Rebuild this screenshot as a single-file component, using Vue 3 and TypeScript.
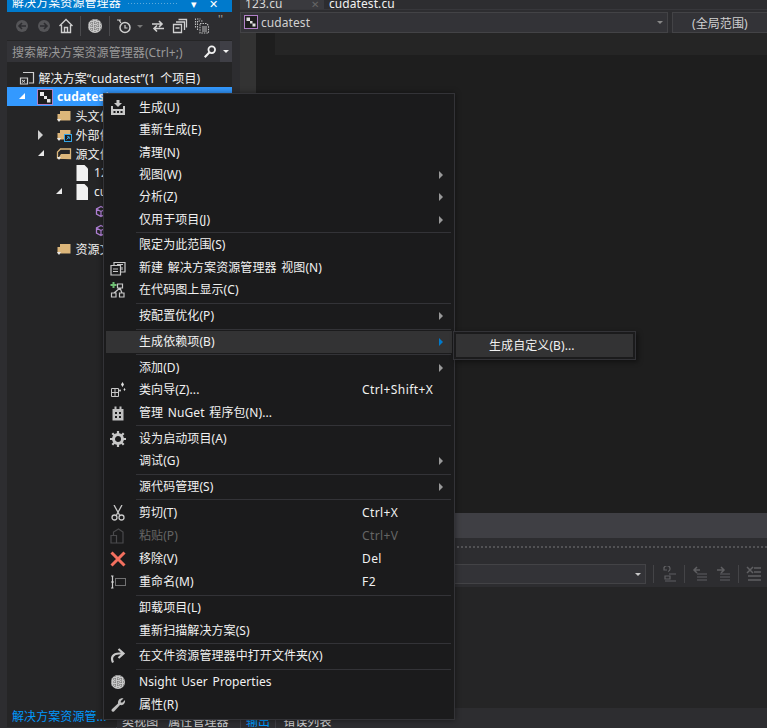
<template>
  <div class="ide">
    <div class="left-col">
      <div class="panel">
        <div class="title-bar">
          <span class="title-text">解决方案资源管理器</span>
          <span class="grip"></span>
          <span class="title-btn">▾</span>
          <span class="title-btn">✕</span>
        </div>
        <div class="toolbar">
          <svg class="tb-icon" viewBox="0 0 16 16"><circle cx="8" cy="8" r="6" fill="#555558" /><path d="M12 8H5M8 5 5 8l3 3" fill="none" stroke="#2d2d30" stroke-width="1.6" /></svg>
          <svg class="tb-icon" viewBox="0 0 16 16"><circle cx="8" cy="8" r="6" fill="#555558" /><path d="M4 8h7M8 5l3 3-3 3" fill="none" stroke="#2d2d30" stroke-width="1.6" /></svg>
          <svg class="tb-icon" viewBox="0 0 16 16"><path d="M1.500 8 8 1.500 14.500 8M3.500 7v7.500h9V7M6.500 14.500v-5h3v5" fill="none" stroke="#d0d0d0" stroke-width="1.400" /></svg>
          <span class="tb-sep"></span>
          <svg class="tb-icon" viewBox="0 0 16 16"><circle cx="8" cy="8" r="7" fill="#c8c8c8" /><path d="M5 2v12M8 1v14M11 2v12M1 5h14M1 8h14M1 11h14" stroke="#6a6a6a" stroke-width="1" stroke-dasharray="1 1" /></svg>
          <span class="tb-sep"></span>
          <svg class="tb-icon" viewBox="0 0 16 16"><circle cx="9" cy="9.500" r="5" fill="none" stroke="#d0d0d0" stroke-width="1.500" /><path d="M9 7v3h2.500M1 2h4M3 2l2 3" fill="none" stroke="#d0d0d0" stroke-width="1.200" /></svg>
          <span class="tb-caret"></span>
          <svg class="tb-icon" viewBox="0 0 16 16"><path d="M2 6h10M9 3l3 3-3 3M14 10.500H4M7 7.500l-3 3 3 3" fill="none" stroke="#d0d0d0" stroke-width="1.600" /></svg>
          <svg class="tb-icon" viewBox="0 0 16 16"><path d="M1.500 6.500h8v8h-8zM4 4h8.500v8M6.500 1.500h8v8" fill="none" stroke="#d0d0d0" stroke-width="1.300" /><path d="M3.500 10h4" stroke="#d0d0d0" stroke-width="1.500" /></svg>
          <svg class="tb-icon" viewBox="0 0 16 16"><path d="M6 5.500h6.500l2 2v7.500H6zM3.500 12V3h6M1.500 9.500V1h5" fill="none" stroke="#c0c0c0" stroke-width="1.100" stroke-dasharray="1.500 1" /><path d="M8 9h5M8 11h5M8 13h5" stroke="#c0c0c0" /></svg>
          <span class="tb-more">''</span>
        </div>
        <div class="search">
          <span class="search-hint">搜索解决方案资源管理器(Ctrl+;)</span>
          <svg class="search-icon" viewBox="0 0 16 16"><circle cx="10" cy="5.500" r="3.800" fill="none" stroke="#f1f1f1" stroke-width="2" /><path d="M7.200 8.500 2 14" stroke="#f1f1f1" stroke-width="2.400" /></svg>
          <span class="search-drop"><i class="caret-white"></i></span>
        </div>
        <div class="tree">
          <div
            v-for="row in treeRows"
            :key="row.id"
            :class="['tree-row', { selected: row.selected }]"
            :style="{ paddingLeft: 30 + 18.5 * row.depth + 'px' }"
          >
            <span v-if="row.arrow" :class="['tree-arrow', row.arrow]"></span>
            <svg class="tree-icon" viewBox="0 0 16 16">
              <template v-if="row.icon === 'solution'">
                <path d="M4 2.500h10.500v10.500H10M1.500 8h7v6h-7z" fill="none" stroke="#d0d0d0" stroke-width="1.200" />
                <path d="M3 10l3 2.500M6 10l-3 2.500" stroke="#d0d0d0" />
              </template>
              <template v-else-if="row.icon === 'project'">
                <rect x="0.500" y="0.500" width="15" height="15" fill="#1e1e1e" stroke="#b180c8" />
                <path d="M3 3h4v4H3zM7 7h3v3H7zM10 10h3.500v3.500H10z" fill="#e8e8e8" />
              </template>
              <template v-else-if="row.icon === 'folder' || row.icon === 'folderLink'">
                <path d="M4 3h10.500v9.500H1.500V6H4z" fill="#dcb67a" />
                <path d="M1 11h4l-2 3z" fill="#e8e8e8" />
                <template v-if="row.icon === 'folderLink'">
                  <rect x="8.500" y="7.500" width="7" height="7" fill="#1e1e1e" stroke="#35a7e8" />
                  <path d="M10.500 12.500 13 10M11 9.800h2.200V12" fill="none" stroke="#35a7e8" />
                </template>
              </template>
              <template v-else-if="row.icon === 'folderOpen'">
                <path d="M1.500 12V6l3-3h10v9.500z" fill="none" stroke="#dcb67a" stroke-width="1.300" />
                <path d="M2 12.500 5 8h9.500v4.500z" fill="#dcb67a" />
                <path d="M1 11h4l-2 3z" fill="#e8e8e8" />
              </template>
              <path v-else-if="row.icon === 'file'" d="M2.500 0h8l3.500 3.500V16H2.500z" fill="#f1f1f1" />
              <template v-else-if="row.icon === 'cube'">
                <path d="M8 3.500 12.500 6v5L8 13.500 3.500 11V6zM3.500 6 8 8.500 12.500 6M8 8.500v5" fill="none" stroke="#b180d7" stroke-width="1.300" />
              </template>
            </svg>
            <span class="tree-label">{{ row.label }}</span>
          </div>
        </div>
      </div>
      <div class="panel-tabs">
        <span class="panel-tab active">解决方案资源管...</span>
        <span class="panel-tab first">类视图</span>
        <span class="panel-tab">属性管理器</span>
      </div>
    </div>

    <div class="right-col">
      <div class="doc-tabs">
        <span class="doc-tab">123.cu <i class="pin"></i><i class="tab-x">✕</i></span>
        <span class="doc-tab current">cudatest.cu</span>
      </div>
      <div class="nav-bar">
        <div class="combo main-combo">
          <svg class="tree-icon" viewBox="0 0 16 16">
            <rect x="0.500" y="0.500" width="13" height="13" fill="#1e1e1e" stroke="#b180c8" />
            <path d="M2.500 2.500h3.500v3.500h-3.500zM6 6h2.500v2.500H6zM8.500 8.500h3v3h-3z" fill="#e0e0e0" />
          </svg>
          <span class="combo-text">cudatest</span>
          <i class="caret-grey"></i>
        </div>
        <div class="combo scope-combo">(全局范围)</div>
      </div>
      <div class="editor">
        <div class="gutter"></div>
        <div class="margin"></div>
        <div class="code"><div class="line-hl"></div></div>
      </div>
      <div class="out-title"></div>
      <div class="out-tools">
        <div class="dots"></div>
        <div class="out-bar">
          <div class="combo out-combo"><i class="caret-white small"></i></div>
          <span class="out-sep"></span>
          <svg class="out-icon" viewBox="0 0 16 16"><path d="M7 5.500A3 3 0 1 0 3 3M3 1v3h3M8 8h7M4 10h5v3H4zM4 15h11" fill="none" stroke="#5f5f62" stroke-width="1.200" /></svg>
          <span class="out-sep"></span>
          <svg class="out-icon" viewBox="0 0 16 16"><path d="M8 4H2M5 1 2 4l3 3" fill="none" stroke="#5f5f62" stroke-width="1.500" /><path d="M5 8h10M5 11h10M5 14h10" stroke="#5f5f62" stroke-width="1.200" /></svg>
          <svg class="out-icon" viewBox="0 0 16 16"><path d="M2 4h7M6 1l3 3-3 3" fill="none" stroke="#5f5f62" stroke-width="1.500" /><path d="M5 8h10M5 11h10M5 14h10" stroke="#5f5f62" stroke-width="1.200" /></svg>
          <span class="out-sep"></span>
          <svg class="out-icon" viewBox="0 0 16 16"><path d="M1 1l6 6M7 1 1 7M8 2h7M8 6h7M2 10h13M2 14h13" fill="none" stroke="#5f5f62" stroke-width="1.500" /></svg>
        </div>
      </div>
      <div class="out-body"></div>
      <div class="out-tabs">
        <span class="out-tab active">输出</span>
        <span class="out-tab">错误列表</span>
      </div>
    </div>

    <div class="menu">
      <template v-for="item in menuItems" :key="item.id">
        <div v-if="item.sep" class="menu-sep"></div>
        <div v-else :class="['menu-item', { hover: item.hover, disabled: item.disabled }]">
          <svg class="menu-icon" viewBox="0 0 16 16">
            <template v-if="item.icon === 'build'">
              <path d="M6.500 0h3v3H12L8 7 4 3h2.500z" fill="#c8c8c8" />
              <path d="M1 6h2v3h10V6h2v9H1z" fill="#c8c8c8" />
              <path d="M3.500 11h2v2h-2zM7 11h2v2H7zM10.500 11h2v2h-2z" fill="#1b1b1c" />
            </template>
            <template v-else-if="item.icon === 'view'">
              <path d="M1 5.500h9.500v9.500H1zM4 5V2.500h11V12h-4" fill="none" stroke="#c8c8c8" stroke-width="1.200" />
              <path d="M3 9h5M3 11.500h5M7 4.500h6M12 7v3" stroke="#c8c8c8" />
            </template>
            <template v-else-if="item.icon === 'codemap'">
              <path d="M3.500 0v6M.5 3h6" stroke="#6fbf73" stroke-width="2" />
              <path d="M7.500 2h5v4h-5zM1.500 11h4.500v4H1.500zM9.500 11H14v4H9.500zM10 6l-6 5M10 6l2 5" fill="none" stroke="#c8c8c8" stroke-width="1.200" />
            </template>
            <template v-else-if="item.icon === 'wizard'">
              <path d="M1.500 6.500h7v8h-7zM1.500 10.500h7M5 6.500v8" fill="none" stroke="#c8c8c8" />
              <path d="M12.500 0l1.500 2.500-1.500 2.500L11 2.500zM14.500 6l1 1.500-1 1.500-1-1.500zM10 7l1 1.500-1 1.500-1-1.500z" fill="#e0e0e0" />
            </template>
            <template v-else-if="item.icon === 'nuget'">
              <path d="M2.500 4h2V1.500h2V4h3V1.500h2V4h2v11.500h-11z" fill="#c0c0c0" />
              <path d="M5 7h2v2H5zM9 7h2v2H9zM5 11h2v2H5zM9 11h2v2H9z" fill="#1b1b1c" />
            </template>
            <template v-else-if="item.icon === 'gear'">
              <circle cx="8" cy="8" r="4.500" fill="none" stroke="#c8c8c8" stroke-width="3" />
              <path d="M8 0v3M8 13v3M0 8h3M13 8h3M2.300 2.300l2 2M11.700 11.700l2 2M13.700 2.300l-2 2M4.300 11.700l-2 2" stroke="#c8c8c8" stroke-width="2.200" />
            </template>
            <template v-else-if="item.icon === 'cut'">
              <path d="M4 0l5.500 10M12 0 6.500 10" stroke="#c8c8c8" stroke-width="1.300" />
              <circle cx="4.500" cy="12.500" r="2.500" fill="none" stroke="#c8c8c8" stroke-width="1.300" />
              <circle cx="11.500" cy="12.500" r="2.500" fill="none" stroke="#c8c8c8" stroke-width="1.300" />
            </template>
            <template v-else-if="item.icon === 'paste'">
              <path d="M1 7.500h5.500V15H1zM3.500 7V4L8.500 1 13 4v11H7" fill="none" stroke="#4a4a4c" stroke-width="1.200" />
            </template>
            <path v-else-if="item.icon === 'remove'" d="M1.500 1.500 14.500 14.500M14.500 1.500 1.500 14.500" stroke="#f4705f" stroke-width="3" />
            <template v-else-if="item.icon === 'rename'">
              <path d="M1 2h2.500M1 14h2.500M2.500 2v12M1 8h3" stroke="#d0d0d0" stroke-width="1.200" />
              <rect x="5.500" y="4.500" width="10" height="7" fill="none" stroke="#c8c8c8" stroke-dasharray="1 1" />
            </template>
            <path v-else-if="item.icon === 'open'" d="M3 14.500C.5 9.500 3 5.500 9 5.500h3M8.500 1l5 4.500-5 4.500" fill="none" stroke="#c8c8c8" stroke-width="2.200" />
            <template v-else-if="item.icon === 'nsight'">
              <circle cx="8" cy="8" r="7" fill="#c8c8c8" />
              <path d="M5 2v12M8 1v14M11 2v12M1 5h14M1 8h14M1 11h14" stroke="#6a6a6a" stroke-dasharray="1 1" />
            </template>
            <path v-else-if="item.icon === 'wrench'" d="M13.500 1.500 10.800 4v1.500H12.500L15 3c.5 3-1.500 5.800-5 5L4 14.500C2.500 15.500.8 14 1.800 12.300L8 6.500C7.500 3 10.500.5 13.500 1.500z" fill="#c0c0c0" />
          </svg>
          <span class="menu-label">{{ item.label }}</span>
          <span class="menu-key">{{ item.key }}</span>
          <i v-if="item.sub" class="menu-arrow"></i>
        </div>
      </template>
    </div>
    <div class="submenu"><span class="sub-item">生成自定义(B)...</span></div>
  </div>
</template>

<script setup lang="ts">
interface TreeRow {
  id: number
  depth: number
  icon: string
  label: string
  arrow?: 'open' | 'closed' | 'open-white'
  selected?: boolean
}

interface MenuItem {
  id: number
  sep?: boolean
  icon?: string
  label?: string
  key?: string
  sub?: boolean
  hover?: boolean
  disabled?: boolean
}

const treeRows: TreeRow[] = [
  { id: 1, depth: -1, icon: 'solution', label: '解决方案“cudatest”(1 个项目)' },
  { id: 2, depth: 0, icon: 'project', label: 'cudatest', arrow: 'open-white', selected: true },
  { id: 3, depth: 1, icon: 'folder', label: '头文件' },
  { id: 4, depth: 1, icon: 'folderLink', label: '外部依赖项', arrow: 'closed' },
  { id: 5, depth: 1, icon: 'folderOpen', label: '源文件', arrow: 'open' },
  { id: 6, depth: 2, icon: 'file', label: '123.cu' },
  { id: 7, depth: 2, icon: 'file', label: 'cudatest.cu', arrow: 'open' },
  { id: 8, depth: 3, icon: 'cube', label: 'main' },
  { id: 9, depth: 3, icon: 'cube', label: 'kernel' },
  { id: 10, depth: 1, icon: 'folder', label: '资源文件' },
]

const raw: Omit<MenuItem, 'id'>[] = [
  { icon: 'build', label: '生成(U)' },
  { label: '重新生成(E)' },
  { label: '清理(N)' },
  { label: '视图(W)', sub: true },
  { label: '分析(Z)', sub: true },
  { label: '仅用于项目(J)', sub: true },
  { sep: true },
  { label: '限定为此范围(S)' },
  { icon: 'view', label: '新建 解决方案资源管理器 视图(N)' },
  { icon: 'codemap', label: '在代码图上显示(C)' },
  { sep: true },
  { label: '按配置优化(P)', sub: true },
  { sep: true },
  { label: '生成依赖项(B)', sub: true, hover: true },
  { sep: true },
  { label: '添加(D)', sub: true },
  { icon: 'wizard', label: '类向导(Z)...', key: 'Ctrl+Shift+X' },
  { icon: 'nuget', label: '管理 NuGet 程序包(N)...' },
  { sep: true },
  { icon: 'gear', label: '设为启动项目(A)' },
  { label: '调试(G)', sub: true },
  { sep: true },
  { label: '源代码管理(S)', sub: true },
  { sep: true },
  { icon: 'cut', label: '剪切(T)', key: 'Ctrl+X' },
  { icon: 'paste', label: '粘贴(P)', key: 'Ctrl+V', disabled: true },
  { icon: 'remove', label: '移除(V)', key: 'Del' },
  { icon: 'rename', label: '重命名(M)', key: 'F2' },
  { sep: true },
  { label: '卸载项目(L)' },
  { label: '重新扫描解决方案(S)' },
  { sep: true },
  { icon: 'open', label: '在文件资源管理器中打开文件夹(X)' },
  { sep: true },
  { icon: 'nsight', label: 'Nsight User Properties' },
  { icon: 'wrench', label: '属性(R)' },
]

const menuItems: MenuItem[] = raw.map((item, i) => ({ ...item, id: i }))
</script>

<style>
html,
body {
  margin: 0;
  background: #1e1e1e;
}
</style>

<style scoped>
.ide {
  position: relative;
  display: flex;
  width: 767px;
  height: 728px;
  overflow: hidden;
  background: #2d2d30;
  color: #f1f1f1;
  font-family: "Noto Sans", "Noto Sans CJK SC", sans-serif;
  font-size: 12px;
  letter-spacing: 0.08px;
  word-spacing: 1.5px;
}
.left-col {
  display: flex;
  flex-direction: column;
  width: 232px;
  padding-left: 7px;
  box-sizing: border-box;
  flex: none;
}
.panel {
  flex: 1;
  display: flex;
  flex-direction: column;
  background: #252526;
  min-height: 0;
}
.title-bar {
  height: 12px;
  flex: none;
  display: flex;
  align-items: flex-end;
  overflow: hidden;
  background: #007acc;
  color: #fff;
  padding: 0 8px 0 5px;
}
.title-text {
  line-height: 18px;
  white-space: nowrap;
  flex: none;
}
.grip {
  flex: 1;
  height: 4px;
  margin: 0 6px 6px;
  background-image: radial-gradient(#5aa9dd 0.6px, transparent 0.7px);
  background-size: 3px 3px;
}
.title-btn {
  width: 20px;
  text-align: center;
  line-height: 16px;
  font-size: 11px;
  flex: none;
}
.toolbar {
  height: 28px;
  flex: none;
  display: flex;
  align-items: center;
  gap: 6px;
  padding-left: 7px;
  background: #2d2d30;
}
.tb-icon {
  width: 16px;
  height: 16px;
  flex: none;
}
.tb-sep {
  width: 1px;
  height: 20px;
  background: #4a4a4d;
  flex: none;
}
.tb-caret {
  width: 0;
  height: 0;
  margin: 0 1px 0 -1px;
  border: 3px solid transparent;
  border-top: 3px solid #777;
  border-bottom: 0;
}
.tb-more {
  margin: -16px 0 0 2px;
  color: #aaa;
  font-size: 11px;
}
.search {
  height: 21px;
  flex: none;
  margin-top: 1px;
  display: flex;
  align-items: center;
  background: #333337;
  padding-left: 5px;
}
.search-hint {
  flex: 1;
  color: #999;
  white-space: nowrap;
}
.search-icon {
  width: 14px;
  height: 14px;
  margin-right: 3px;
  flex: none;
}
.search-drop {
  width: 12px;
  height: 21px;
  display: flex;
  align-items: center;
  justify-content: center;
  background: #3f3f46;
  flex: none;
}
.caret-white {
  display: block;
  width: 0;
  height: 0;
  border: 3px solid transparent;
  border-top: 3px solid #f1f1f1;
  border-bottom: 0;
}
.caret-white.small {
  margin-left: auto;
  margin-right: 4px;
  border-top-color: #c8c8c8;
}
.tree {
  padding-top: 6px;
}
.tree-row {
  display: flex;
  align-items: center;
  height: 19px;
  white-space: nowrap;
}
.tree-row.selected {
  background: #3399ff;
  color: #fff;
  font-weight: 700;
}
.tree-arrow {
  width: 20px;
  margin-left: -20px;
  height: 10px;
  position: relative;
  flex: none;
}
.tree-arrow::after {
  content: "";
  position: absolute;
  left: 2px;
  top: 1px;
}
.tree-arrow.open::after,
.tree-arrow.open-white::after {
  width: 0;
  height: 0;
  border-left: 6px solid transparent;
  border-bottom: 6px solid #e8e8e8;
}
.tree-arrow.open-white::after {
  border-bottom-color: #fff;
}
.tree-arrow.closed::after {
  left: 2px;
  top: 0;
  width: 0;
  height: 0;
  border-top: 5px solid transparent;
  border-bottom: 5px solid transparent;
  border-left: 5px solid #d0d0d0;
}
.tree-icon {
  width: 16px;
  height: 16px;
  flex: none;
}
.tree-label {
  margin-left: 4px;
}
.panel-tabs {
  height: 20px;
  flex: none;
  display: flex;
  align-items: flex-end;
  overflow: hidden;
  background: #2d2d30;
}
.panel-tab {
  padding: 0 5px;
  color: #d0d0d0;
  line-height: 12px;
  white-space: nowrap;
  flex: none;
}
.panel-tab.active {
  width: 110px;
  box-sizing: border-box;
  height: 20px;
  line-height: 20px;
  color: #0097fb;
  background: #252526;
  position: relative;
  top: -1px;
}
.panel-tab.first {
  box-shadow: -1px 0 0 #3f3f46;
}
.right-col {
  flex: 1;
  min-width: 0;
  display: flex;
  flex-direction: column;
  padding-left: 8px;
}
.doc-tabs {
  height: 9px;
  flex: none;
  display: flex;
  overflow: hidden;
  background: #2d2d30;
}
.doc-tab {
  height: 9px;
  width: 84px;
  box-sizing: border-box;
  padding-left: 5px;
  line-height: 8px;
  color: #d8d8d8;
  background: #3a3a3e;
  white-space: nowrap;
  flex: none;
}
.doc-tab.current {
  padding-left: 5px;
  width: 120px;
  background: #2d2d30;
  color: #f1f1f1;
}
.pin,
.tab-x {
  font-style: normal;
  color: #666;
  font-size: 10px;
  margin-left: 12px;
}
.nav-bar {
  height: 24px;
  flex: none;
  display: flex;
  gap: 4px;
  padding-top: 2px;
  box-sizing: border-box;
  background: #2d2d30;
  border-top: 1px solid #37373b;
}
.combo {
  height: 21px;
  box-sizing: border-box;
  display: flex;
  align-items: center;
  background: #333337;
  border: 1px solid #434346;
  color: #d0d0d0;
}
.main-combo {
  width: 428px;
  padding: 0 3px;
}
.combo-text {
  margin-left: 1px;
  flex: 1;
}
.caret-grey {
  width: 0;
  height: 0;
  border: 3px solid transparent;
  border-top: 3px solid #888;
  border-bottom: 0;
  margin-right: 1px;
}
.scope-combo {
  flex: 1;
  padding-left: 19px;
  border-right: 0;
}
.editor {
  flex: 1;
  min-height: 0;
  display: flex;
  background: #1e1e1e;
}
.gutter {
  width: 16px;
  background: #333333;
  flex: none;
}
.margin {
  width: 19px;
  flex: none;
}
.code {
  flex: 1;
}
.line-hl {
  height: 22px;
  background: #252525;
}
.out-title {
  height: 25px;
  flex: none;
  background: #3f3f44;
}
.out-tools {
  height: 49px;
  flex: none;
  display: flex;
  flex-direction: column;
  background: #2d2d30;
}
.dots {
  height: 5px;
  margin-top: 7px;
  background-image: radial-gradient(#555558 0.7px, transparent 0.8px);
  background-size: 4px 4px;
  flex: none;
}
.out-bar {
  display: flex;
  align-items: center;
  gap: 7px;
  margin-top: 14px;
}
.out-combo {
  width: 406px;
  flex: none;
  height: 20px;
}
.out-sep {
  width: 1px;
  height: 18px;
  background: #444447;
  flex: none;
}
.out-icon {
  width: 16px;
  height: 16px;
  flex: none;
}
.out-body {
  height: 121px;
  flex: none;
  background: #252526;
}
.out-tabs {
  height: 20px;
  flex: none;
  display: flex;
  align-items: flex-end;
  overflow: hidden;
  background: #2d2d30;
  box-shadow: inset 1px 0 0 #3f3f46;
}
.out-tab {
  padding: 0 5px;
  line-height: 12px;
  color: #d0d0d0;
  white-space: nowrap;
}
.out-tab.active {
  color: #0097fb;
  margin-left: 1px;
  box-shadow: 1px 0 0 #3f3f46;
  margin-right: 3px;
}
.menu {
  position: absolute;
  left: 103px;
  top: 93px;
  width: 352px;
  box-sizing: border-box;
  padding: 3px 2px;
  background: #1b1b1c;
  border: 1px solid #333337;
  box-shadow: 0 0 6px rgba(0, 0, 0, 0.45);
}
.menu-item {
  display: flex;
  align-items: center;
  height: 22.6px;
  line-height: 16px;
  padding-left: 4px;
  white-space: nowrap;
}
.menu-item:nth-child(-n + 6) {
  height: 22.3px;
}
.menu-item:nth-child(n + 25):nth-child(-n + 28) {
  height: 23px;
}
.menu-item.hover {
  background: #333334;
}
.menu-item.disabled {
  color: #656565;
}
.menu-icon {
  width: 16px;
  height: 16px;
  flex: none;
}
.menu-label {
  width: 223px;
  margin-left: 13px;
  flex: none;
}
.menu-key {
  flex: 1;
  letter-spacing: 0.4px;
}
.menu-arrow {
  width: 0;
  height: 0;
  margin-right: 9px;
  border-top: 4px solid transparent;
  border-bottom: 4px solid transparent;
  border-left: 4px solid #999;
}
.menu-item.hover .menu-arrow {
  border-left-color: #007acc;
}
.menu-sep {
  height: 1px;
  margin: 1px 1px 1.200px 30px;
  background: #333337;
}
.submenu {
  position: absolute;
  left: 453px;
  top: 331px;
  width: 183px;
  height: 29px;
  box-sizing: border-box;
  padding: 2px;
  background: #1b1b1c;
  border: 1px solid #333337;
  box-shadow: 2px 2px 5px rgba(0, 0, 0, 0.45);
}
.sub-item {
  display: block;
  height: 23px;
  line-height: 23px;
  padding-left: 33px;
  background: #333334;
}
</style>
